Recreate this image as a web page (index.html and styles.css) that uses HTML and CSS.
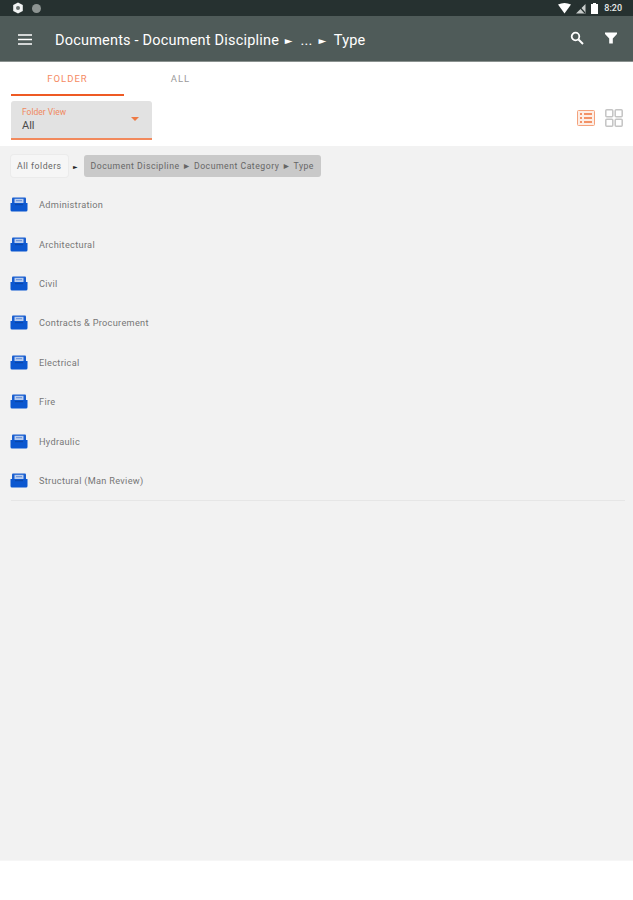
FILE: index.html
```html
<!DOCTYPE html>
<html lang="en">
<head>
    <meta charset="UTF-8">
    <meta name="viewport" content="width=device-width, initial-scale=1.0">
    <title>Documents</title>
    <link rel="stylesheet" href="styles.css">
</head>
<body>
    <svg class="sprite" width="0" height="0">
        <symbol id="folder" viewBox="0 0 18 15">
            <path d="M2 1.500Q2 .5 3 .5H15Q16 .5 16 1.500V6H2Z" fill="#1a5fd0"/>
            <rect x="4.500" y="1.800" width="9" height="4.700" fill="#b9cdee"/>
            <rect x="6" y="3.200" width="6" height="1" fill="#5f8bd8"/>
            <path d="M.5 6H17.500V13Q17.500 14.500 16 14.500H2Q.5 14.500 .5 13Z" fill="#0b57d0"/>
            <rect x="5" y="7" width="8" height="1.200" fill="#0a47ab"/>
        </symbol>
    </svg>

    <div class="statusbar">
        <div class="status-left">
            <svg width="12" height="12" viewBox="0 0 12 12"><path d="M6 .5 10.800 3V9L6 11.500 1.200 9V3Z" fill="#f2f4f4"/><circle cx="6" cy="6" r="2" fill="#69716f"/></svg>
            <span class="status-dot"></span>
        </div>
        <div class="status-right">
            <svg width="13" height="11" viewBox="0 0 13 11"><path d="M0 1.500Q6.500-1.500 13 1.500L6.500 10.500Z" fill="#fff"/></svg>
            <svg width="10" height="11" viewBox="0 0 10 11"><path d="M9.500 1V10.500H0Z" fill="#c9cdcc"/><path d="M1 1 9 10" stroke="#263130" stroke-width="1.200"/></svg>
            <svg width="7" height="11" viewBox="0 0 7 11"><path d="M2 0H5V1H7V11H0V1H2Z" fill="#fff"/></svg>
            <span class="clock">8:20</span>
        </div>
    </div>

    <div class="toolbar">
        <svg class="menu-icon" width="14" height="11" viewBox="0 0 14 11"><path d="M0 1H14M0 5.500H14M0 10H14" stroke="#fff" stroke-width="1.600"/></svg>
        <div class="toolbar-title">Documents - Document Discipline <span class="arrow">►</span> ... <span class="arrow">►</span> Type</div>
        <svg class="search-icon" width="14" height="14" viewBox="0 0 14 14"><circle cx="5.500" cy="5.500" r="3.800" fill="none" stroke="#fff" stroke-width="1.800"/><path d="M8.500 8.500 13 13" stroke="#fff" stroke-width="2"/></svg>
        <svg class="filter-icon" width="12" height="12" viewBox="0 0 12 12"><path d="M0 .5H12V2L7.800 6.500V11.500H4.200V6.500L0 2Z" fill="#fff"/></svg>
    </div>

    <div class="tabs">
        <div class="tab tab-active">FOLDER</div>
        <div class="tab">ALL</div>
    </div>

    <div class="filter-row">
        <div class="select-box">
            <div class="select-text">
                <div class="select-label">Folder View</div>
                <div class="select-value">All</div>
            </div>
            <span class="select-caret"></span>
        </div>
        <div class="view-icons">
            <svg width="18" height="16" viewBox="0 0 18 16"><rect x=".5" y=".5" width="17" height="15" rx="1" fill="#fdeee6" stroke="#f4a27c"/><path d="M3 4H5M7 4H15M3 8H5M7 8H15M3 12H5M7 12H15" stroke="#f0743c" stroke-width="1.300"/></svg>
            <svg width="18" height="18" viewBox="0 0 18 18"><g fill="none" stroke="#c4c4c4" stroke-width="1.500"><rect x=".8" y=".8" width="7" height="7" rx="1"/><rect x="10.200" y=".8" width="7" height="7" rx="1"/><rect x=".8" y="10.200" width="7" height="7" rx="1"/><rect x="10.200" y="10.200" width="7" height="7" rx="1"/></g></svg>
        </div>
    </div>

    <div class="main">
        <div class="crumbs">
            <div class="crumb">All folders</div>
            <span class="crumb-sep">►</span>
            <div class="crumb crumb-current">Document Discipline ► Document Category ► Type</div>
        </div>
        <div class="folder-list">
            <div class="folder-row"><svg class="folder-icon"><use href="#folder"/></svg>Administration</div>
            <div class="folder-row"><svg class="folder-icon"><use href="#folder"/></svg>Architectural</div>
            <div class="folder-row"><svg class="folder-icon"><use href="#folder"/></svg>Civil</div>
            <div class="folder-row"><svg class="folder-icon"><use href="#folder"/></svg>Contracts &amp; Procurement</div>
            <div class="folder-row"><svg class="folder-icon"><use href="#folder"/></svg>Electrical</div>
            <div class="folder-row"><svg class="folder-icon"><use href="#folder"/></svg>Fire</div>
            <div class="folder-row"><svg class="folder-icon"><use href="#folder"/></svg>Hydraulic</div>
            <div class="folder-row"><svg class="folder-icon"><use href="#folder"/></svg>Structural (Man Review)</div>
        </div>
    </div>

    <div class="bottom"></div>
</body>
</html>
```

FILE: styles.css
```css
html, body {
    height: 100%;
}
body {
    margin: 0;
    display: flex;
    flex-direction: column;
    height: 900px;
    overflow: hidden;
    background: white;
    font-family: Roboto, "Liberation Sans", sans-serif;
    color: #4a4a4a;
}
.sprite {
    position: absolute;
}
.statusbar {
    height: 16px;
    flex: none;
    display: flex;
    justify-content: space-between;
    align-items: center;
    padding: 0 11px 0 12px;
    background: #263130;
}
.status-left, .status-right {
    display: flex;
    align-items: center;
}
.status-left {
    gap: 8px;
}
.status-right {
    gap: 5px;
}
.status-dot {
    width: 9px;
    height: 9px;
    border-radius: 50%;
    background: #8d9492;
}
.clock {
    font-size: 9px;
    font-weight: 500;
    color: #e8eaea;
    margin-left: 1px;
}
.toolbar {
    height: 45px;
    flex: none;
    display: flex;
    align-items: center;
    padding-left: 18px;
    background: #4f5b59;
    border-bottom: 1px solid #8a918f;
    color: white;
}
.menu-icon {
    flex: none;
    margin-top: 2px;
}
.toolbar-title {
    flex: 1;
    margin: 4px 0 0 23px;
    font-size: 14.500px;
    letter-spacing: 0.2px;
    white-space: nowrap;
}
.arrow {
    font-size: 10px;
    font-family: "DejaVu Sans", sans-serif;
    vertical-align: 1px;
    margin: 0 4px 0 2px;
}
.search-icon {
    margin: 0 21px 2px 0;
}
.filter-icon {
    margin: 0 16px 2px 0;
}
.tabs {
    display: flex;
    flex: none;
    height: 34px;
    padding-left: 11px;
}
.tab {
    width: 113px;
    text-align: center;
    font-size: 9.500px;
    letter-spacing: 1px;
    line-height: 34px;
    color: #9a9a9a;
}
.tab-active {
    color: #f58a62;
    border-bottom: 2px solid #ee5a24;
    height: 32px;
}
.filter-row {
    flex: none;
    height: 50px;
    display: flex;
    justify-content: space-between;
    align-items: flex-start;
    padding: 5px 10px 0 11px;
    box-sizing: border-box;
}
.select-box {
    width: 141px;
    height: 39px;
    box-sizing: border-box;
    display: flex;
    justify-content: space-between;
    align-items: center;
    padding: 0 13px 0 11px;
    background: #e2e2e2;
    border-radius: 3px 3px 0 0;
    border-bottom: 2px solid #f2895c;
}
.select-label {
    font-size: 8.500px;
    color: #f0895e;
}
.select-value {
    font-size: 11px;
    margin-top: 2px;
    color: #4a4a4a;
}
.select-caret {
    width: 0;
    height: 0;
    margin-bottom: 1px;
    border-left: 4px solid transparent;
    border-right: 4px solid transparent;
    border-top: 4px solid #ee7a45;
}
.view-icons {
    display: flex;
    align-items: center;
    gap: 10px;
    height: 33px;
}
.main {
    flex: 1;
    padding: 0 8px 0 11px;
    background: #f2f2f2;
}
.crumbs {
    display: flex;
    align-items: center;
    height: 22px;
    margin-top: 9px;
    font-size: 8.700px;
    letter-spacing: 0.5px;
    color: #666;
}
.crumb {
    height: 22px;
    line-height: 22px;
    padding: 0 6px;
    border-radius: 3px;
    white-space: nowrap;
    background: #f6f6f6;
    box-shadow: 0 0 0 1px #ebebeb;
}
.crumb-sep {
    font-size: 6px;
    font-family: "DejaVu Sans", sans-serif;
    color: #222;
    width: 16px;
    text-align: center;
}
.crumb-current {
    padding: 0 7px;
    background: #c9c9c9;
    box-shadow: none;
}
.folder-list {
    margin-top: 8px;
    border-bottom: 1px solid #e6e6e6;
}
.folder-row {
    height: 39.400px;
    display: flex;
    align-items: center;
    font-size: 9.200px;
    letter-spacing: 0.3px;
    color: #777;
}
.folder-icon {
    width: 18px;
    height: 15px;
    margin: 0 11px 0 -1px;
    flex: none;
}
.bottom {
    height: 39px;
    flex: none;
    background: white;
    border-top: 1px solid #f6f6f6;
}
```
